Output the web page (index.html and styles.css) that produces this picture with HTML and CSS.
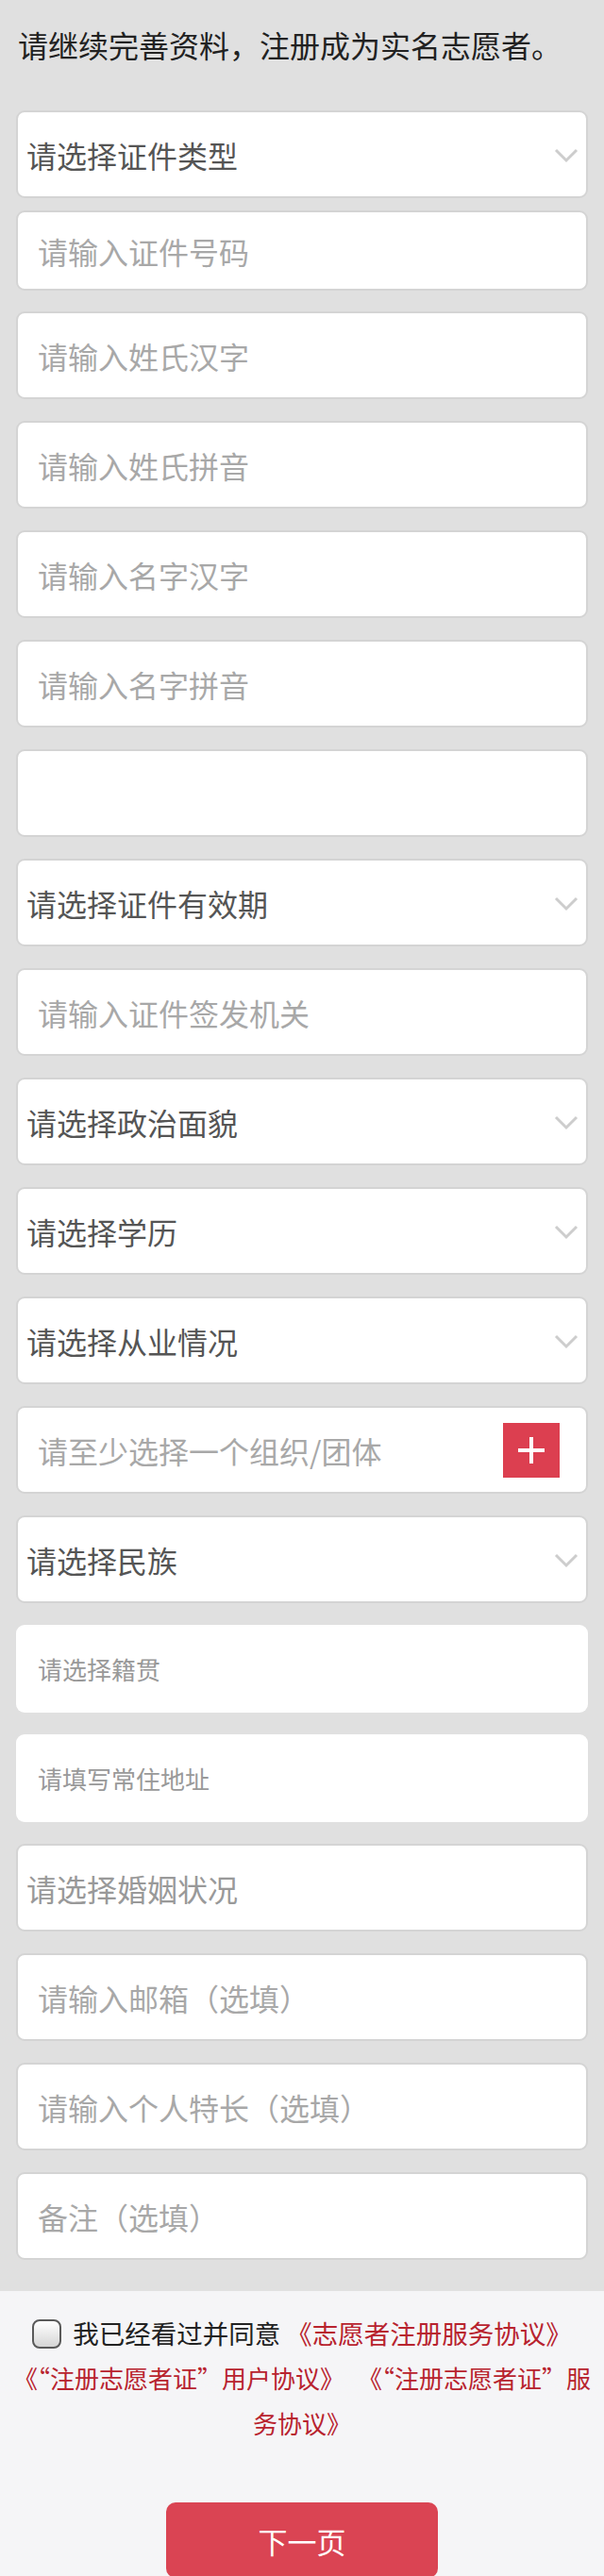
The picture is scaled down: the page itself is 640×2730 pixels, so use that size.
FILE: index.html
```html
<!DOCTYPE html>
<html lang="zh-CN">
<head>
    <meta charset="utf-8">
    <title>注册志愿者</title>
    <link rel="stylesheet" href="styles.css">
</head>
<body>
    <div id="form">
        <p class="title">请继续完善资料，注册成为实名志愿者。</p>

        <div class="field field-select field-first">
            <select class="control"><option>请选择证件类型</option></select>
            <svg class="arrow" width="26" height="16" viewBox="0 0 26 16"><polyline points="2,2 13,13 24,2" fill="none" stroke="#cdcdcd" stroke-width="3"/></svg>
        </div>
        <div class="field field-short">
            <input class="control" type="text" placeholder="请输入证件号码">
        </div>
        <div class="field">
            <input class="control" type="text" placeholder="请输入姓氏汉字">
        </div>
        <div class="field">
            <input class="control" type="text" placeholder="请输入姓氏拼音">
        </div>
        <div class="field">
            <input class="control" type="text" placeholder="请输入名字汉字">
        </div>
        <div class="field">
            <input class="control" type="text" placeholder="请输入名字拼音">
        </div>
        <div class="field">
            <input class="control" type="text">
        </div>
        <div class="field field-select">
            <select class="control"><option>请选择证件有效期</option></select>
            <svg class="arrow" width="26" height="16" viewBox="0 0 26 16"><polyline points="2,2 13,13 24,2" fill="none" stroke="#cdcdcd" stroke-width="3"/></svg>
        </div>
        <div class="field">
            <input class="control" type="text" placeholder="请输入证件签发机关">
        </div>
        <div class="field field-select">
            <select class="control"><option>请选择政治面貌</option></select>
            <svg class="arrow" width="26" height="16" viewBox="0 0 26 16"><polyline points="2,2 13,13 24,2" fill="none" stroke="#cdcdcd" stroke-width="3"/></svg>
        </div>
        <div class="field field-select">
            <select class="control"><option>请选择学历</option></select>
            <svg class="arrow" width="26" height="16" viewBox="0 0 26 16"><polyline points="2,2 13,13 24,2" fill="none" stroke="#cdcdcd" stroke-width="3"/></svg>
        </div>
        <div class="field field-select">
            <select class="control"><option>请选择从业情况</option></select>
            <svg class="arrow" width="26" height="16" viewBox="0 0 26 16"><polyline points="2,2 13,13 24,2" fill="none" stroke="#cdcdcd" stroke-width="3"/></svg>
        </div>
        <div class="field">
            <input class="control" type="text" placeholder="请至少选择一个组织/团体">
            <span class="add-button">
                <svg width="30" height="30" viewBox="0 0 30 30"><path d="M15 1v28M1 15h28" stroke="#fff" stroke-width="4"/></svg>
            </span>
        </div>
        <div class="field field-select">
            <select class="control"><option>请选择民族</option></select>
            <svg class="arrow" width="26" height="16" viewBox="0 0 26 16"><polyline points="2,2 13,13 24,2" fill="none" stroke="#cdcdcd" stroke-width="3"/></svg>
        </div>
        <div class="field field-plain">
            <input class="control" type="text" placeholder="请选择籍贯">
        </div>
        <div class="field field-plain">
            <input class="control" type="text" placeholder="请填写常住地址">
        </div>
        <div class="field field-select field-muted">
            <select class="control"><option>请选择婚姻状况</option></select>
        </div>
        <div class="field">
            <input class="control" type="text" placeholder="请输入邮箱（选填）">
        </div>
        <div class="field">
            <input class="control" type="text" placeholder="请输入个人特长（选填）">
        </div>
        <div class="field">
            <input class="control" type="text" placeholder="备注（选填）">
        </div>
    </div>

    <div id="agree">
        <div class="agree-line">
            <label><input class="check" type="checkbox">我已经看过并同意</label>
            <a class="link" href="#">《志愿者注册服务协议》</a>
        </div>
        <div class="agree-links">
            <a class="link" href="#">《“注册志愿者证”用户协议》</a>
            <a class="link" href="#">《“注册志愿者证”服务协议》</a>
        </div>
        <button id="next-button">下一页</button>
    </div>
</body>
</html>
```

FILE: styles.css
```css
body {
    margin: 0;
    font-family: "Noto Sans CJK SC", "Noto Sans", sans-serif;
    background-color: #f5f5f7;
    overflow-x: hidden;
}
#form {
    background-color: #e0e0e0;
    padding: 23px 17px 10px;
}
.title {
    margin: 0 0 46px;
    padding-left: 2px;
    font-size: 32px;
    line-height: 48px;
    color: #222;
}
.field {
    display: flex;
    align-items: center;
    box-sizing: border-box;
    height: 93px;
    margin-bottom: 23px;
    padding-right: 8px;
    background-color: #fff;
    border: 2px solid #d4d4d4;
    border-radius: 9px;
}
.field-first {
    margin-bottom: 13px;
}
.field-short {
    height: 85px;
    margin-bottom: 22px;
}
.control {
    flex: 1;
    min-width: 0;
    height: 100%;
    padding: 0 0 0 21px;
    border: none;
    outline: none;
    background: transparent;
    font-family: inherit;
    font-size: 32px;
    color: #333;
}
.control::placeholder {
    color: #a8a8a8;
}
.field-select .control {
    -webkit-appearance: none;
    appearance: none;
    padding-left: 9px;
    color: #555;
}
.field-muted .control {
    color: #999;
}
.field-plain {
    border: none;
}
.field-plain .control {
    padding-left: 23px;
    font-size: 26px;
}
.field-plain .control::placeholder {
    color: #999;
}
.arrow {
    flex-shrink: 0;
    margin-top: 2px;
}
.add-button {
    display: flex;
    align-items: center;
    justify-content: center;
    flex-shrink: 0;
    width: 60px;
    height: 58px;
    margin-right: 20px;
    background-color: #dc3f50;
}
#agree {
    padding-top: 20px;
    text-align: center;
    font-size: 27.5px;
    line-height: 48px;
    color: #222;
}
.agree-links {
    padding: 0 12px;
    font-size: 26px;
}
.agree-links .link + .link {
    margin-left: 8px;
}
.check {
    -webkit-appearance: none;
    appearance: none;
    box-sizing: border-box;
    width: 31px;
    height: 31px;
    margin: 0 12px 0 0;
    vertical-align: -5px;
    border: 2px solid #5a5a5a;
    border-radius: 8px;
    background: linear-gradient(#fff, #d6d6d6);
}
.link {
    color: #b8232e;
    text-decoration: none;
}
#next-button {
    display: block;
    width: 288px;
    height: 80px;
    margin: 60px auto 0;
    border: none;
    border-radius: 10px;
    background-color: #da4453;
    color: #fff;
    font-family: inherit;
    font-size: 31px;
}
```
